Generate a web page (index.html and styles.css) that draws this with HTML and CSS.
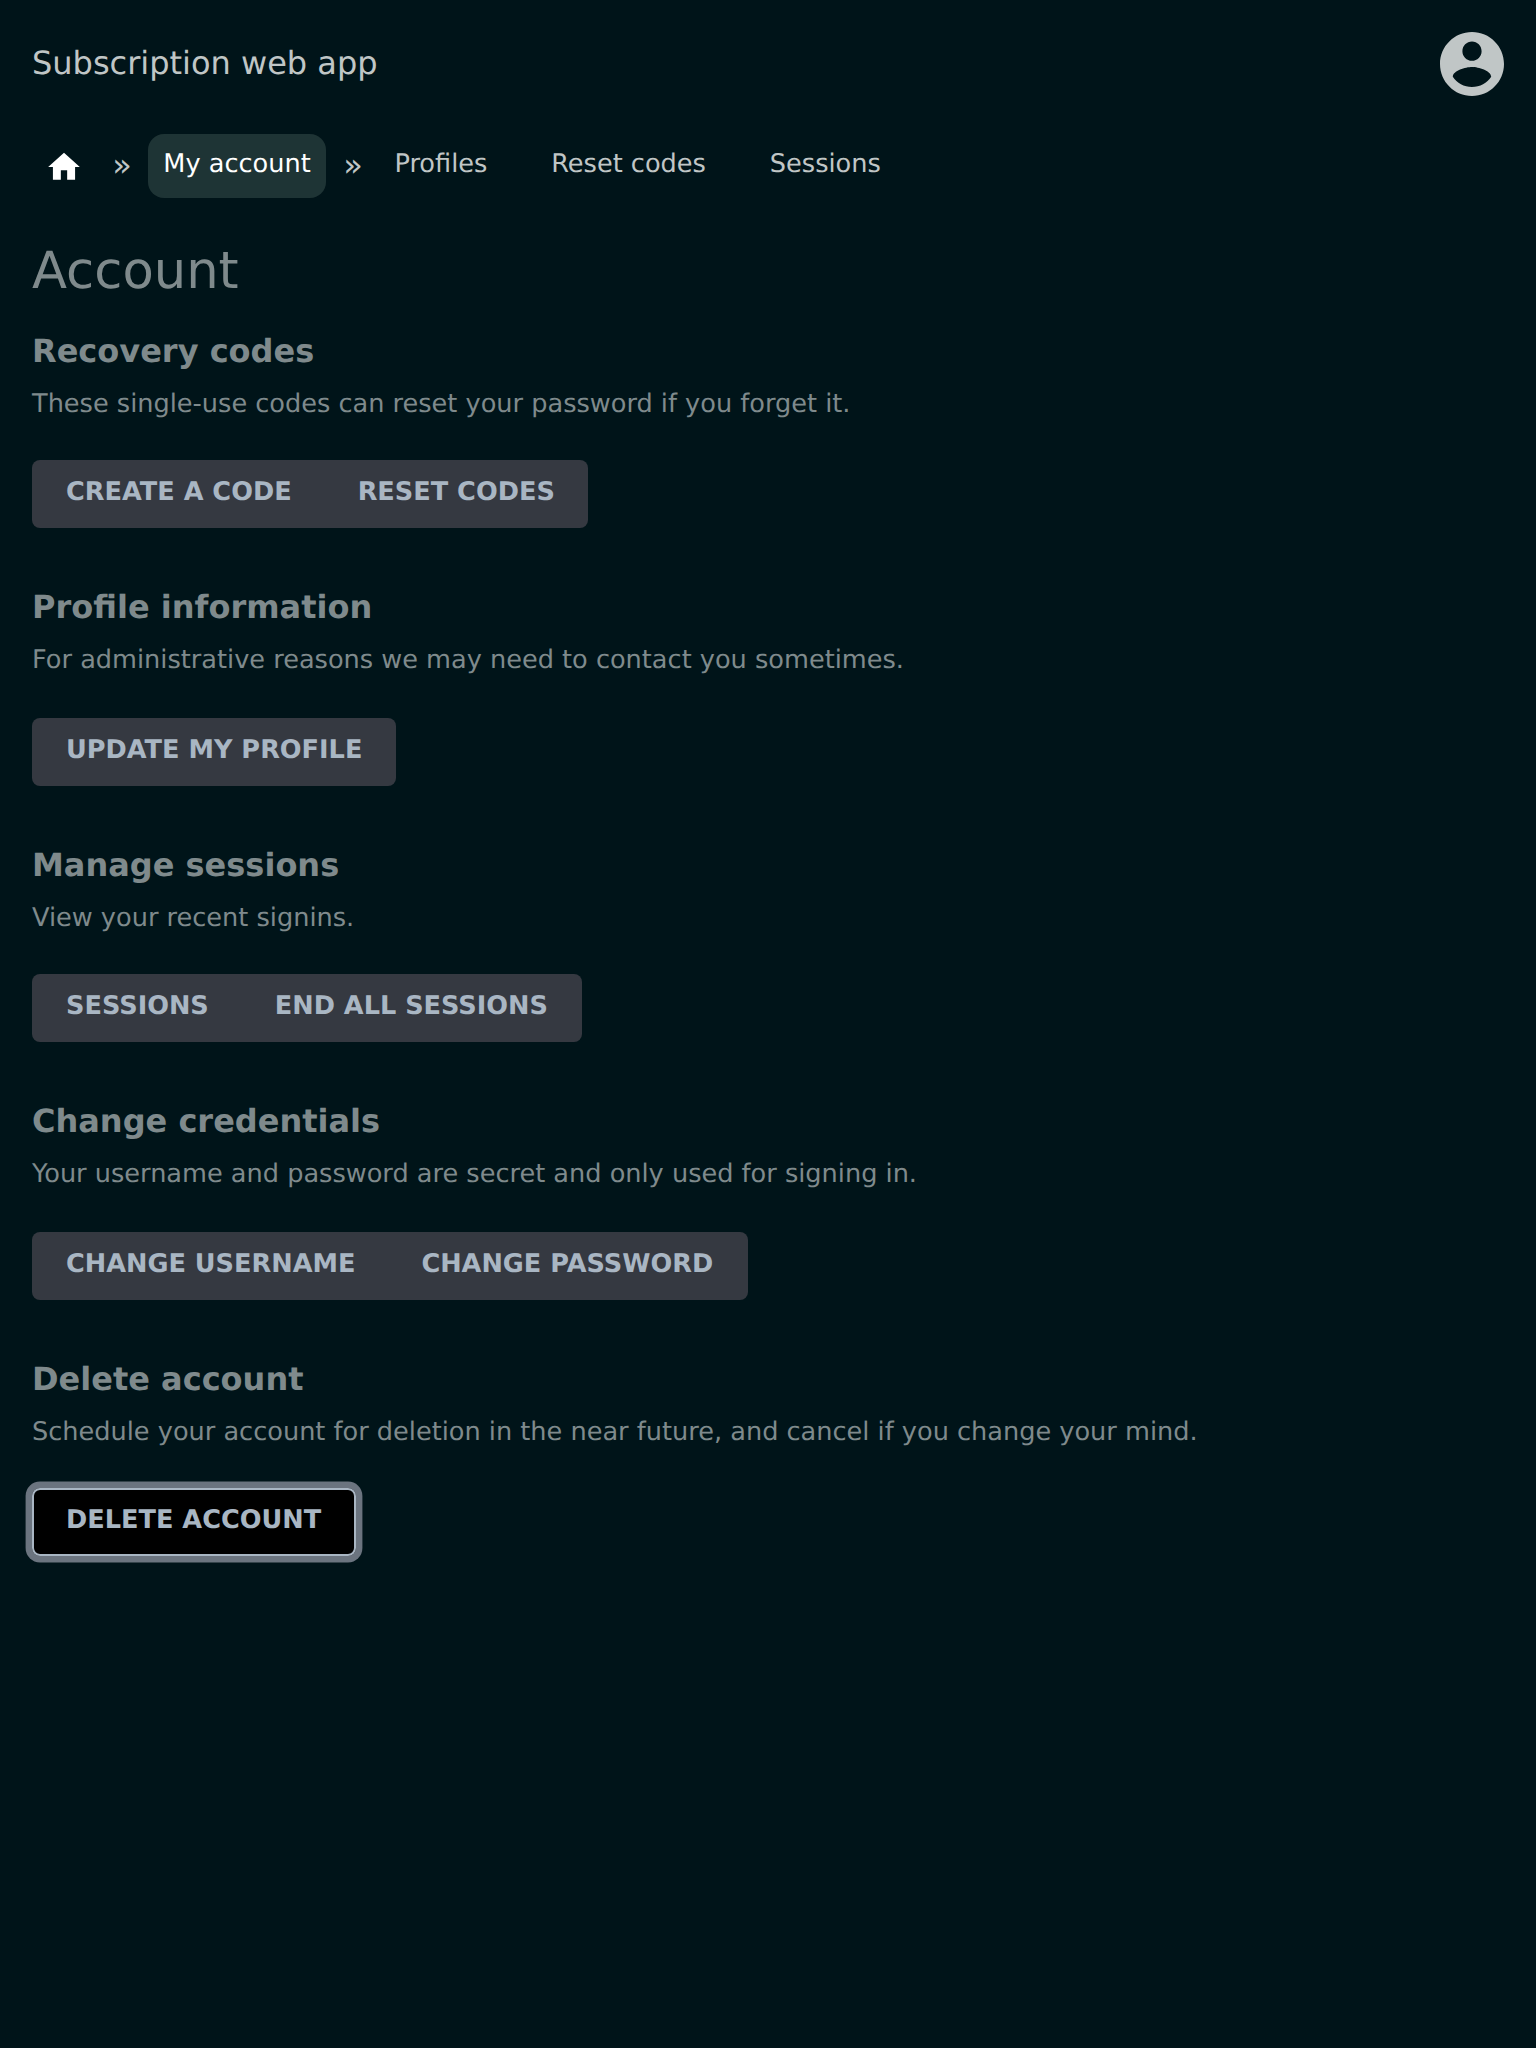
FILE: index.html
```html
<!DOCTYPE html>
<html lang="en">
<head>
<meta charset="utf-8">
<title>Account</title>
<link rel="stylesheet" href="styles.css">
</head>
<body>
<header class="header">
  <a class="brand">Subscription web app</a>
  <svg class="avatar" viewBox="2 2 20 20"><path d="M12 2C6.48 2 2 6.48 2 12s4.48 10 10 10 10-4.48 10-10S17.52 2 12 2zm0 3c1.66 0 3 1.34 3 3s-1.34 3-3 3-3-1.34-3-3 1.34-3 3-3zm0 14.2c-2.5 0-4.71-1.28-6-3.22.03-1.99 4-3.08 6-3.08 1.99 0 5.97 1.09 6 3.08-1.29 1.94-3.5 3.22-6 3.22z"/></svg>
</header>
<nav class="nav">
  <a class="home"><svg viewBox="0 0 24 24"><path d="M10 20v-6h4v6h5v-8h3L12 3 2 12h3v8z"/></svg></a>
  <span class="sep">»</span>
  <a class="link active">My account</a>
  <span class="sep wide">»</span>
  <a class="link">Profiles</a>
  <a class="link">Reset codes</a>
  <a class="link">Sessions</a>
</nav>
<main class="content">
  <h1>Account</h1>
  <section class="group">
    <h2>Recovery codes</h2>
    <p>These single-use codes can reset your password if you forget it.</p>
    <menu class="buttons codes"><li><a class="button">Create a code</a></li><li><a class="button">Reset codes</a></li></menu>
  </section>
  <section class="group tall">
    <h2>Profile information</h2>
    <p>For administrative reasons we may need to contact you sometimes.</p>
    <menu class="buttons profile"><li><a class="button">Update my profile</a></li></menu>
  </section>
  <section class="group">
    <h2>Manage sessions</h2>
    <p>View your recent signins.</p>
    <menu class="buttons sessions"><li><a class="button">Sessions</a></li><li><a class="button">End all sessions</a></li></menu>
  </section>
  <section class="group tall">
    <h2>Change credentials</h2>
    <p>Your username and password are secret and only used for signing in.</p>
    <menu class="buttons credentials"><li><a class="button">Change username</a></li><li><a class="button">Change password</a></li></menu>
  </section>
  <section class="group">
    <h2>Delete account</h2>
    <p>Schedule your account for deletion in the near future, and cancel if you change your mind.</p>
    <menu class="buttons focused"><li><a class="button">Delete account</a></li></menu>
  </section>
</main>
</body>
</html>
```

FILE: styles.css
```css
* { box-sizing: border-box; }
body {
  margin: 0;
  min-height: 2048px;
  padding: 32px;
  background: #001419;
  color: #7f8a8c;
  font: 25.6px/40px "DejaVu Sans", sans-serif;
  text-rendering: geometricPrecision;
}
.header { display: flex; align-items: center; justify-content: space-between; height: 64px; color: #c0c6c6; }
.brand { padding-bottom: 2px; font-size: 32px; }
.avatar { width: 64px; height: 64px; fill: #c0c6c6; }
.nav { display: flex; height: 64px; margin-top: 38px; line-height: 60px; color: #c0c6c6; }
.home { width: 64px; height: 64px; padding: 14px 13px; }
.home svg { display: block; width: 38px; height: 38px; fill: #fff; }
.sep { width: 52px; padding-top: 1px; text-align: center; font-size: 32px; }
.sep.wide { width: 53px; padding-left: 1px; }
.link { padding: 0 15.36px; margin-right: 33.2px; }
.link.active { margin-right: 0; border-radius: 16px; background: #1e3435; color: #fff; }
.content { padding-top: 41px; }
h1 { margin: 0; font-size: 51.2px; line-height: 64px; font-weight: 400; }
h2 { margin: 0; font-size: 32px; line-height: 48px; }
p { margin: 0; padding-top: 9px; line-height: 40px; }
.group { height: 256px; }
.group.tall { height: 258px; }
h1 + .group { margin-top: 24px; }
.buttons { display: flex; height: 68px; margin: 36px 0 0; padding: 0 1px; list-style: none; white-space: nowrap; border-radius: 8px; background: #353941; }
.tall .buttons { margin-top: 38px; }
.codes { width: 556px; }
.profile { width: 364px; }
.sessions { width: 550px; }
.credentials { width: 716px; }
.button { display: block; padding: 0 33px; line-height: 64px; font-weight: 700; text-transform: uppercase; color: #a9b6c3; }
.focused { width: 324px; background: #000; box-shadow: inset 0 0 0 2px #a9b6c3, 0 0 0 6.4px #6b747f; }
```
